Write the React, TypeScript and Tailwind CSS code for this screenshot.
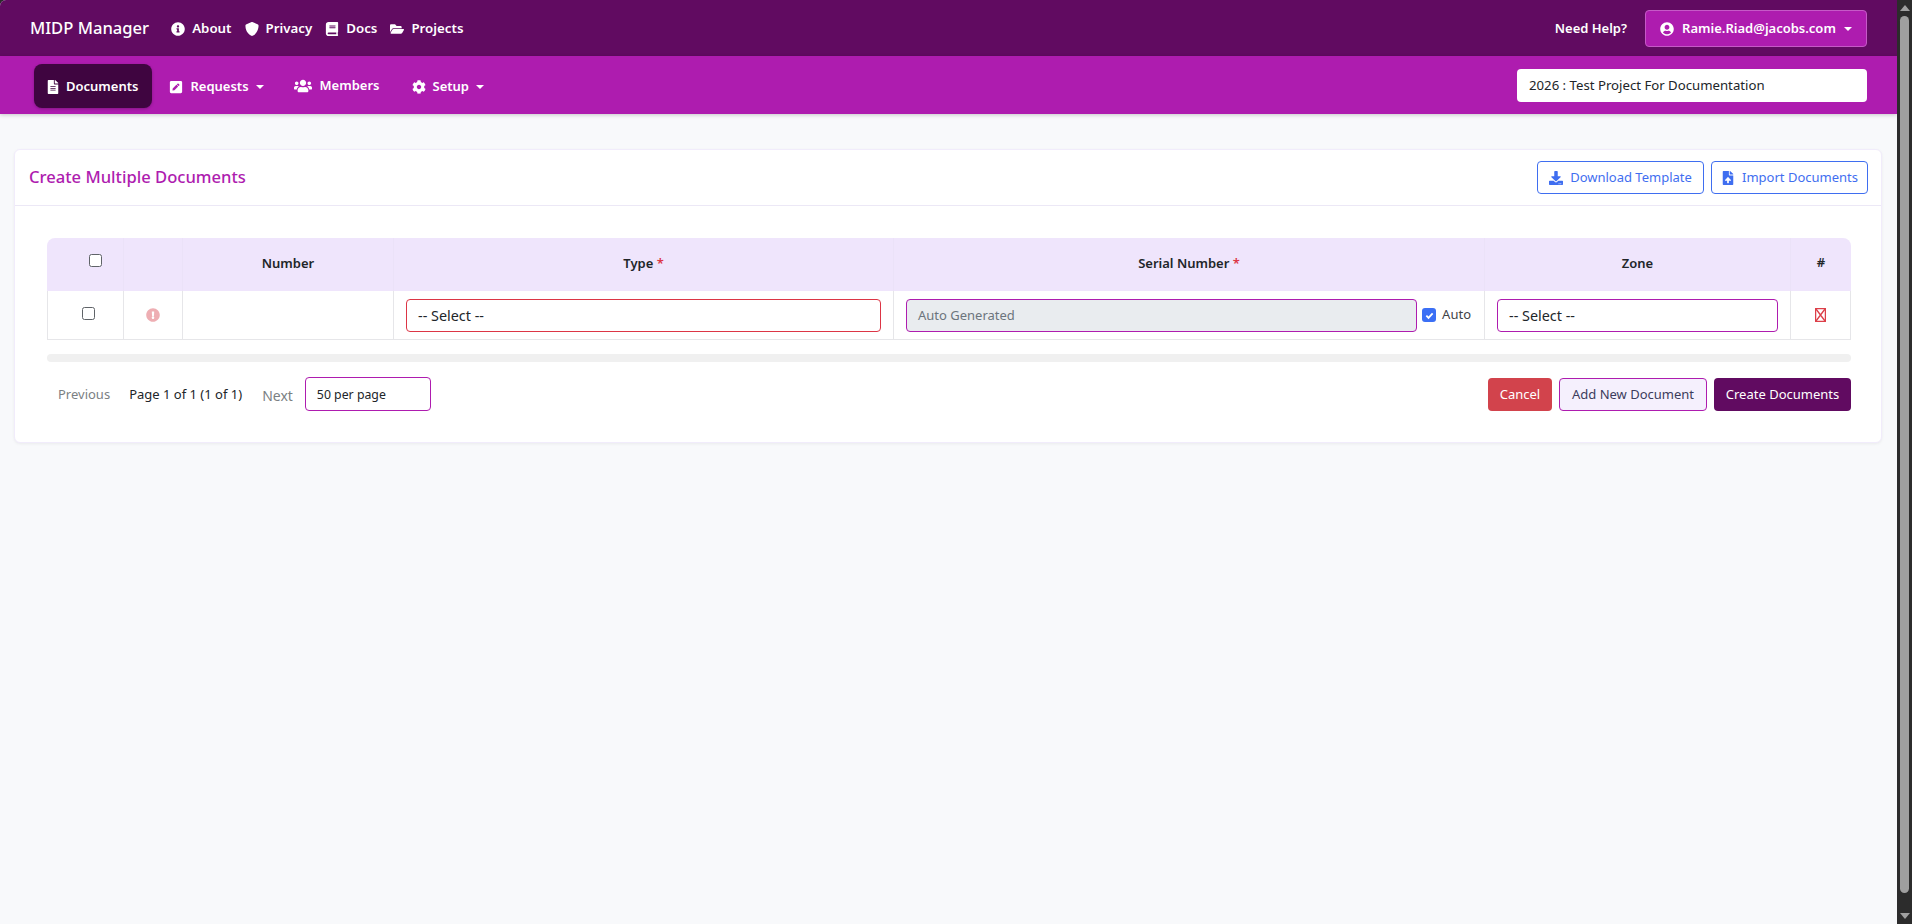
import { FaBook, FaCog, FaDownload, FaExclamationCircle, FaFileAlt, FaFileUpload, FaFolderOpen, FaInfoCircle, FaPenSquare, FaUserCircle, FaUsers } from "react-icons/fa";
import { FaShield } from "react-icons/fa6";

const Caret = () => <span className="inline-block border-x-[4px] border-t-[4px] border-x-transparent border-t-white align-middle" />;

function TopBar() {
    const links = [
        { label: "About", icon: <FaInfoCircle /> },
        { label: "Privacy", icon: <FaShield /> },
        { label: "Docs", icon: <FaBook /> },
        { label: "Projects", icon: <FaFolderOpen /> },
    ];
    return (
        <div className="flex h-14 items-center bg-[#610b61] pl-[30px] pr-[30px] pt-[1px] text-white">
            <span className="mr-[22px] text-[16.6px] font-medium">MIDP Manager</span>
            <div className="flex items-center gap-[13px]">
                {links.map(l => (
                    <span key={l.label} className="flex items-center gap-[7px] text-[13.3px] font-semibold">
                        <span className="text-[14px]">{l.icon}</span>
                        {l.label}
                    </span>
                ))}
            </div>
            <span className="ml-auto mr-[18px] text-[13px] font-semibold">Need Help?</span>
            <div className="flex h-[37px] w-[222px] items-center justify-center gap-[8px] rounded-[4px] border border-[#c659c7] bg-[#ae1caf] text-[13px] font-semibold">
                <FaUserCircle className="text-[14px]" />
                Ramie.Riad@jacobs.com
                <Caret />
            </div>
        </div>
    );
}

function SubBar() {
    return (
        <div className="flex h-[58px] items-center bg-[#ae1caf] pl-[34px] pr-[30px] text-white shadow-[0_1px_4px_rgba(0,0,0,0.2)]">
            <div className="flex items-center pt-[2px] text-[13px] font-semibold">
                <span className="flex h-[44px] items-center gap-[6px] rounded-[8px] bg-[#3f0540] pl-[12px] pr-[14px] pt-[1px] shadow-[0_1px_3px_rgba(0,0,0,0.25)]">
                    <FaFileAlt className="text-[14px]" /> Documents
                </span>
                <span className="ml-[17px] flex items-center gap-[7px] pt-[1px]">
                    <FaPenSquare className="text-[14px]" /> Requests<Caret />
                </span>
                <span className="ml-[30px] flex items-center gap-[8px]">
                    <FaUsers className="text-[18px]" /> Members
                </span>
                <span className="ml-[32px] flex items-center gap-[7px] pt-[1px]">
                    <FaCog className="text-[14px]" /> Setup<Caret />
                </span>
            </div>
            <div className="ml-auto flex h-[33px] w-[350px] items-center rounded-[4px] bg-white px-[12px] pt-[1px] text-[13.2px] text-[#212529]">
                2026 : Test Project For Documentation
            </div>
        </div>
    );
}

function DeleteGlyph() {
    return (
        <svg width="11" height="14" viewBox="0 0 11 14" fill="none" stroke="#dc3f49" strokeWidth="1.3" className="mx-auto">
            <rect x="0.6" y="0.6" width="9.8" height="12.8" />
            <path d="M1 1l9 12M10 1L1 13" />
        </svg>
    );
}

function DocTable() {
    const th = "border-r border-[#ebe2f8] text-center text-[13px] font-semibold text-[#212529]";
    const td = "border-r border-b border-[#e6e6e9] align-middle";
    const box = "block h-[13px] w-[13px] rounded-[2.5px] border border-[#5f6368] bg-white";
    return (
        <table className="w-full table-fixed border-separate border-spacing-0 overflow-hidden">
            <colgroup>
                <col className="w-[77px]" />
                <col className="w-[59px]" />
                <col className="w-[211px]" />
                <col className="w-[500px]" />
                <col className="w-[591px]" />
                <col className="w-[306px]" />
                <col className="w-[60px]" />
            </colgroup>
            <thead>
                <tr className="h-[53px] bg-[#efe5fc]">
                    <th className={`${th} rounded-tl-[8px]`}><span className={`${box} mx-auto mb-[8px] translate-x-[10px]`} /></th>
                    <th className={th}></th>
                    <th className={`${th} pb-[1px]`}>Number</th>
                    <th className={`${th} pb-[1px]`}>Type <span className="text-[#dc3545]">*</span></th>
                    <th className={`${th} pb-[1px]`}>Serial Number <span className="text-[#dc3545]">*</span></th>
                    <th className={`${th} pb-[1px]`}>Zone</th>
                    <th className={`${th} rounded-tr-[8px] border-r-0 pb-[3px]`}>#</th>
                </tr>
            </thead>
            <tbody>
                <tr className="h-[49px] text-[13px] text-[#212529]">
                    <td className={`${td} border-l`}><span className={`${box} mx-auto mb-[4px] translate-x-[3px]`} /></td>
                    <td className={td}><FaExclamationCircle className="mx-auto text-[14px] text-[#eeaeb3]" /></td>
                    <td className={td}></td>
                    <td className={`${td} px-[12px]`}>
                        <div className="flex h-[33px] items-center rounded-[4px] border border-[#dc3545] px-[11px] pt-[1px] text-[14.4px]">-- Select --</div>
                    </td>
                    <td className={`${td} pl-[12px] pr-[13px]`}>
                        <div className="flex items-center">
                            <div className="flex h-[33px] flex-1 items-center rounded-[4px] border border-[#ae1caf] bg-[#e9ecef] px-[11px] pt-[1px] text-[#6c757d]">Auto Generated</div>
                            <span className="ml-[5px] flex h-[14px] w-[14px] items-center justify-center rounded-[3px] bg-[#3b6ff5]">
                                <svg width="9" height="9" viewBox="0 0 10 10" fill="none" stroke="white" strokeWidth="2"><path d="M1.5 5.2l2.4 2.4 4.6-5" /></svg>
                            </span>
                            <span className="ml-[6px] text-[#3f4347]">Auto</span>
                        </div>
                    </td>
                    <td className={`${td} px-[12px]`}>
                        <div className="flex h-[33px] items-center rounded-[4px] border border-[#ae1caf] px-[11px] pt-[1px] text-[14.4px]">-- Select --</div>
                    </td>
                    <td className={td}><DeleteGlyph /></td>
                </tr>
            </tbody>
        </table>
    );
}

function Card() {
    return (
        <div className="rounded-[6px] border border-[#f1ecfb] bg-white shadow-[0_1px_3px_rgba(0,0,0,0.06)]">
            <div className="flex h-[56px] items-center border-b border-[#ece8f6] pl-[14px] pr-[13px]">
                <h1 className="text-[16.6px] font-medium text-[#ae1caf]">Create Multiple Documents</h1>
                <div className="ml-auto flex gap-[7px] text-[13px] text-[#3f6ef0]">
                    <span className="flex h-[33px] w-[167px] items-center justify-center gap-[7px] rounded-[4px] border border-[#3f6ef0]"><FaDownload className="text-[14px]" /> Download Template</span>
                    <span className="flex h-[33px] w-[157px] items-center justify-center gap-[7px] rounded-[4px] border border-[#3f6ef0]"><FaFileUpload className="text-[14px]" /> Import Documents</span>
                </div>
            </div>
            <div className="pb-[31px] pl-[32px] pr-[30px] pt-[32px]">
                <DocTable />
                <div className="mt-[14px] h-[8px] rounded-[4px] bg-[#f0f0f0]" />
                <div className="mt-[14px] flex items-center pt-[1px] text-[13px]">
                    <span className="ml-[11px] pt-[2px] text-[#7b7f83]">Previous</span>
                    <span className="ml-[19px] pt-[2px] text-[#212529]">Page 1 of 1 (1 of 1)</span>
                    <span className="ml-[20px] pt-[2px] text-[14px] text-[#7b7f83]">Next</span>
                    <div className="ml-[12px] flex h-[34px] w-[126px] items-center rounded-[4px] border border-[#ae1caf] px-[11px] pt-[2px] text-[12.3px] text-[#212529]">50 per page</div>
                    <div className="ml-auto flex gap-[7px]">
                        <span className="flex h-[33px] w-[64px] items-center justify-center rounded-[4px] bg-[#d2434c] pt-[2px] text-white">Cancel</span>
                        <span className="flex h-[33px] w-[148px] items-center justify-center rounded-[4px] border border-[#ae1caf] bg-[#f5f0fd] pt-[2px] text-[#3c3c5c]">Add New Document</span>
                        <span className="flex h-[33px] w-[137px] items-center justify-center rounded-[4px] bg-[#610b61] pt-[2px] text-white">Create Documents</span>
                    </div>
                </div>
            </div>
        </div>
    );
}

function Scrollbar() {
    return (
        <div className="flex w-[15px] shrink-0 flex-col items-center bg-[#2c2c2c] pt-[5px] pb-[5px]">
            <span className="border-x-[5px] border-b-[6px] border-x-transparent border-b-[#a0a0a0]" />
            <div className="mt-[5px] w-[9px] flex-1 rounded-[4.5px] bg-[#9f9f9f]" />
            <span className="mt-[20px] border-x-[5px] border-t-[6px] border-x-transparent border-t-[#a0a0a0]" />
        </div>
    );
}

export default function App() {
    return (
        <div className="flex h-screen overflow-hidden bg-[#2c2c2c] font-['Noto_Sans','Liberation_Sans',sans-serif]">
            <div className="min-w-0 flex-1 overflow-hidden rounded-tl-[6px] bg-[#f8f9fb]">
                <TopBar />
                <SubBar />
                <div className="pl-[14px] pr-[15px] pt-[35px]">
                    <Card />
                </div>
            </div>
            <Scrollbar />
        </div>
    );
}
